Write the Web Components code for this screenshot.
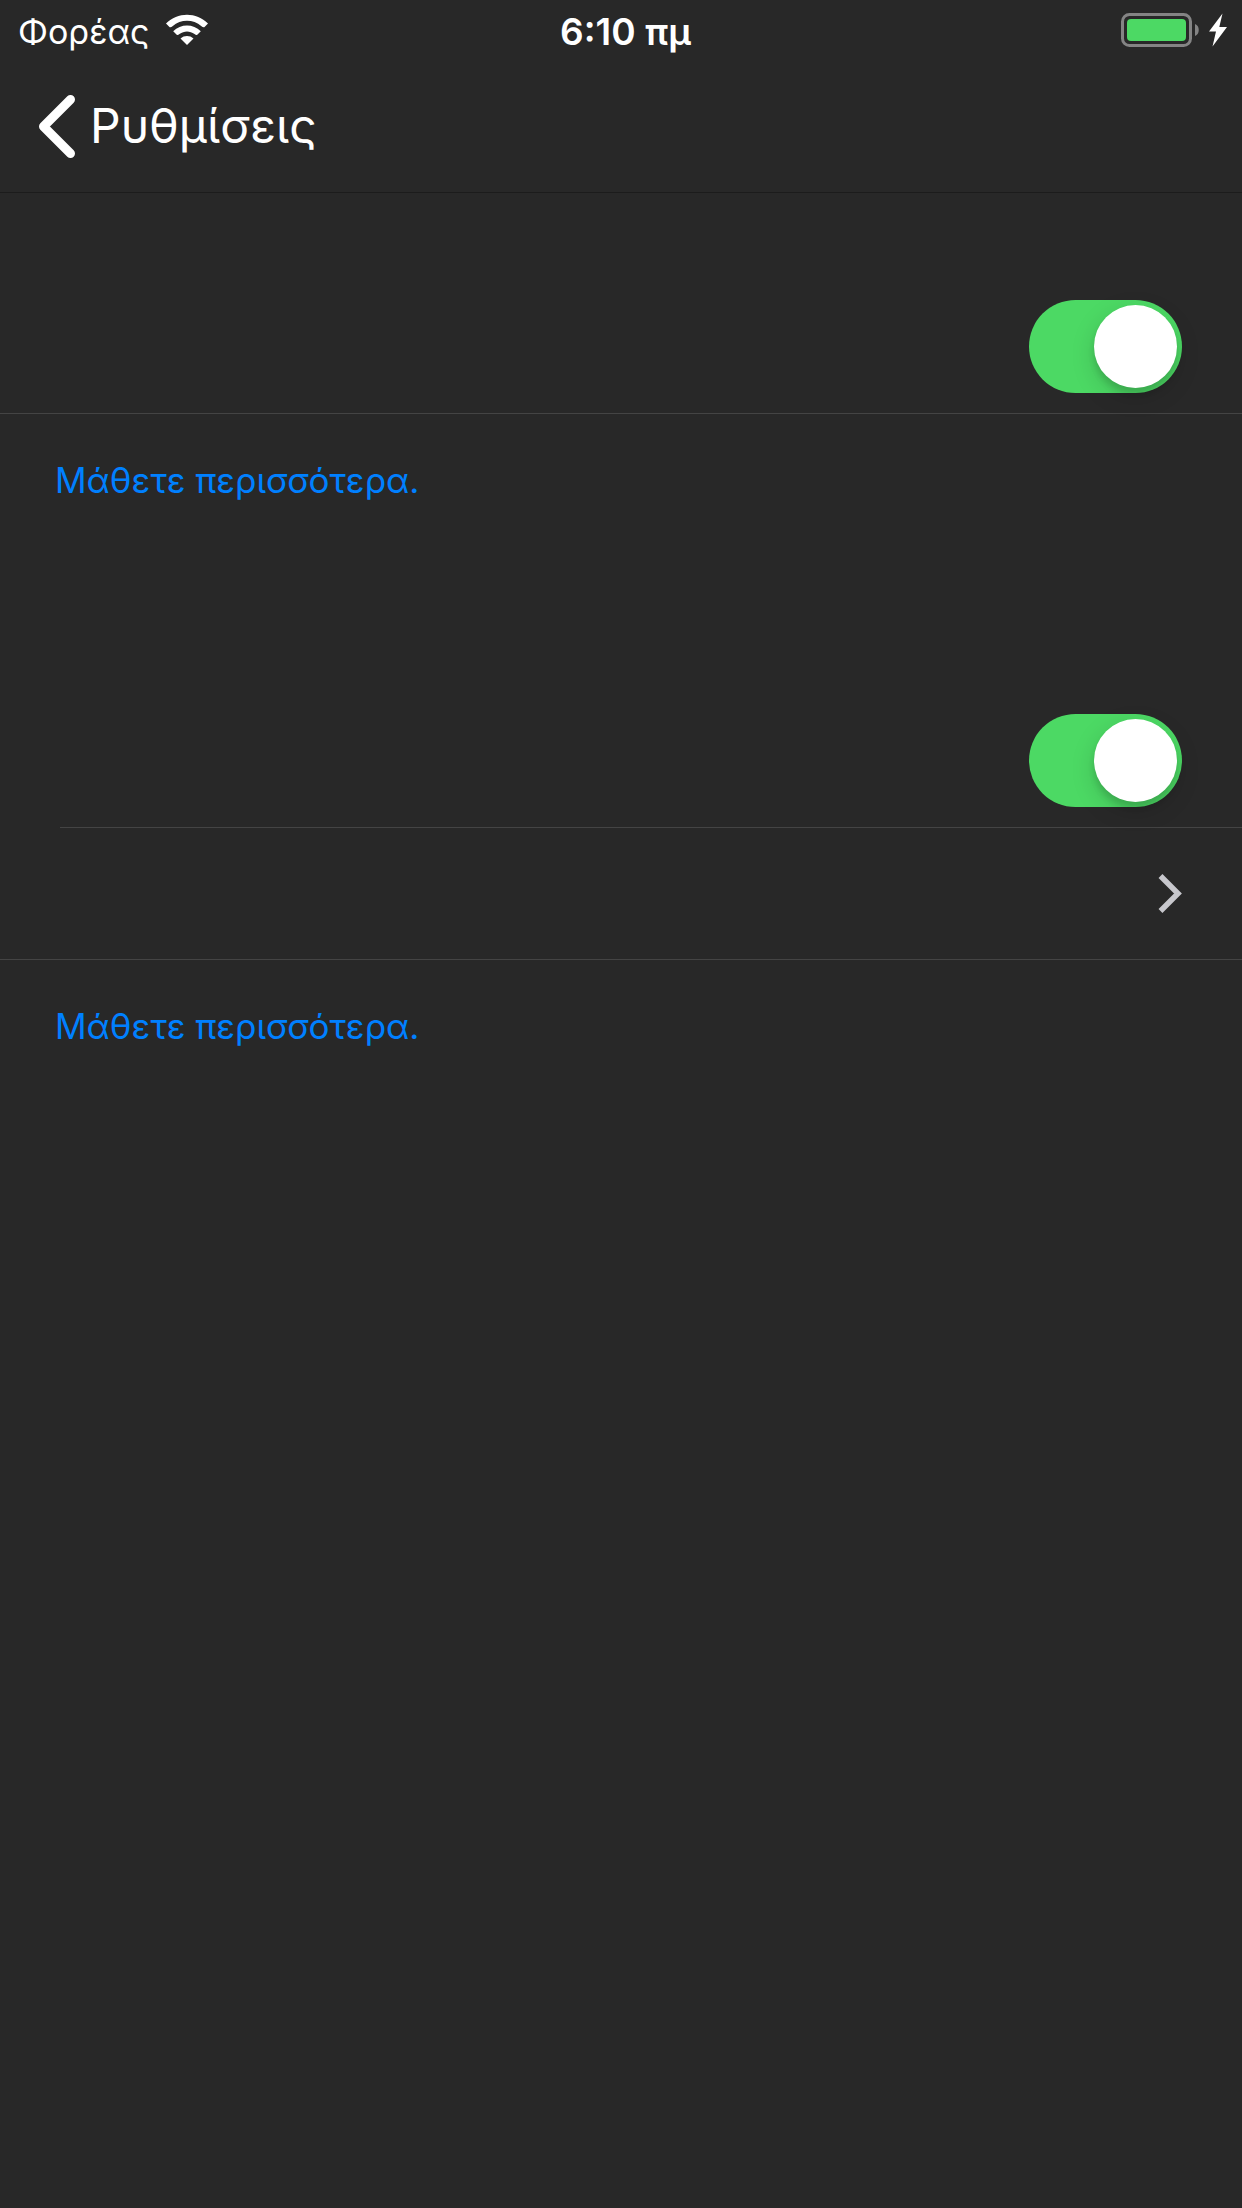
<!DOCTYPE html>
<html lang="el">
<head>
<meta charset="utf-8">
<meta name="viewport" content="width=device-width, initial-scale=1">
<title>Ρυθμίσεις</title>
<style>
  :root { --bg: #282828; --line: #444444; --green: #4cd964; --blue: #0080ff; }
  html { background: var(--bg); }
  body { margin: 0; min-height: 100vh; background: var(--bg); color: #fff; font: 35px/44px Inter, "Noto Sans", sans-serif; }
</style>
</head>
<body>
<settings-page>
  <status-bar slot="status"><span slot="carrier">Φορέας</span><span slot="time">6:10 πμ</span></status-bar>
  <nav-bar slot="nav">Ρυθμίσεις</nav-bar>
  <settings-group>
    <toggle-row name="Ενεργοποίηση"></toggle-row>
    <a slot="footer" href="#more">Μάθετε περισσότερα.</a>
  </settings-group>
  <settings-group>
    <toggle-row name="Αποκλεισμός" inset></toggle-row>
    <link-row name="Λεπτομέρειες"></link-row>
    <a slot="footer" href="#details">Μάθετε περισσότερα.</a>
  </settings-group>
</settings-page>
<script>
function define(name, html, setup) {
  const template = document.createElement('template');
  template.innerHTML = html;
  customElements.define(name, class extends HTMLElement {
    constructor() {
      super();
      this.attachShadow({ mode: 'open' }).append(template.content.cloneNode(true));
    }
    connectedCallback() { if (setup) setup(this, this.shadowRoot); }
  });
}

define('settings-page', `
  <style>
    :host { display: flex; flex-direction: column; min-height: 100vh; }
    main { display: flex; flex-direction: column; padding-top: 89px; gap: 193px; }
  </style>
  <slot name="status"></slot>
  <slot name="nav"></slot>
  <main><slot></slot></main>`);

define('status-bar', `
  <style>
    :host { display: grid; grid-template-columns: 1fr auto 1fr; align-items: center; height: 60px; padding: 0 15px 0 18px; }
    .left, .right { display: flex; align-items: center; }
    .left { gap: 16px; }
    .right { justify-content: flex-end; gap: 8px; }
    .carrier, .time { padding-top: 3px; }
    .carrier { font-size: 34px; }
    .time { padding-left: 6px; font-size: 37px; font-weight: 600; }
    svg { display: block; }
  </style>
  <div class="left">
    <div class="carrier"><slot name="carrier"></slot></div>
    <svg width="44" height="32" viewBox="0 0 44 32" fill="#fff" aria-hidden="true">
      <path d="M1 9.500C12.500-2.200 31.500-2.200 43 9.500L39.300 13.200Q37.800 13.500 36.500 12.200C28 5 16 5 7.500 12.200Q6.200 13.500 4.700 13.200Z"/>
      <path d="M8.200 17.200C15.800 9.700 28.200 9.700 35.800 17.200L32 21Q31 21.300 29.500 20C25 16.500 19 16.500 14.500 20Q13 21.300 12 21Z"/>
      <path d="M15.500 24.500C19.200 21.200 24.800 21.200 28.500 24.500L22 31Z"/>
    </svg>
  </div>
  <div class="time"><slot name="time"></slot></div>
  <div class="right">
    <svg width="80" height="34" viewBox="0 0 80 34" aria-hidden="true">
      <rect x="1.500" y="1.500" width="68" height="31" rx="7" fill="none" stroke="#848484" stroke-width="3"/>
      <rect x="6" y="6" width="59" height="22" rx="4" fill="#4cd964"/>
      <path d="M74 11C79 12.500 79 21.500 74 23Z" fill="#848484"/>
    </svg>
    <svg width="18" height="34" viewBox="0 0 18 34" fill="#fff" aria-hidden="true"><path d="M13.500 0.500L0 18.500H7L3.500 33.500L18 14H10.300Z"/></svg>
  </div>`);

define('nav-bar', `
  <style>
    :host { display: flex; align-items: center; height: 132px; padding: 0 38px; border-bottom: 1px solid #1c1c1c; }
    button { display: flex; align-items: center; gap: 14px; margin: 0; padding: 0; border: 0; background: none; color: #fff; font: inherit; font-size: 48px; line-height: 60px; cursor: pointer; }
    svg { display: block; }
  </style>
  <button type="button">
    <svg width="38" height="64" viewBox="0 0 38 64" fill="none" stroke="#fff" stroke-width="9" stroke-linecap="round" stroke-linejoin="round" aria-hidden="true"><path d="M32.500 5.500L5.500 32.500L32.500 59.500"/></svg>
    <slot></slot>
  </button>`);

define('settings-group', `
  <style>
    :host { display: block; }
    .footer { padding: 44px 55px 1px; }
    ::slotted(a) { color: var(--blue); text-decoration: none; }
  </style>
  <slot></slot>
  <div class="footer"><slot name="footer"></slot></div>`);

define('toggle-row', `
  <style>
    :host { display: block; }
    .row { display: flex; justify-content: flex-end; padding: 18px 60px 20px 0; border-bottom: 1px solid var(--line); }
    :host([inset]) .row { margin-left: 60px; }
    input { appearance: none; display: flex; box-sizing: border-box; width: 153px; height: 93px; margin: 0; padding: 5px; border-radius: 47px; background: #555; cursor: pointer; }
    input::before { content: ""; width: 83px; height: 83px; border-radius: 50%; background: #fff; box-shadow: 0 8px 24px rgba(0,0,0,.15), 0 6px 6px rgba(0,0,0,.12); }
    input:checked { justify-content: flex-end; background: var(--green); }
  </style>
  <div class="row"><input type="checkbox" role="switch" checked></div>`,
  (host, root) => root.querySelector('input').setAttribute('aria-label', host.getAttribute('name')));

define('link-row', `
  <style>
    :host { display: block; }
    a { display: flex; justify-content: flex-end; align-items: center; box-sizing: border-box; height: 132px; padding-right: 60px; border-bottom: 1px solid var(--line); }
    svg { display: block; }
  </style>
  <a href="#row"><svg width="24" height="40" viewBox="0 0 24 40" fill="none" stroke="#c7c7cc" stroke-width="5.500" aria-hidden="true"><path d="M2.500 2L20 19.500L2.500 37"/></svg></a>`,
  (host, root) => root.querySelector('a').setAttribute('aria-label', host.getAttribute('name')));
</script>
</body>
</html>
